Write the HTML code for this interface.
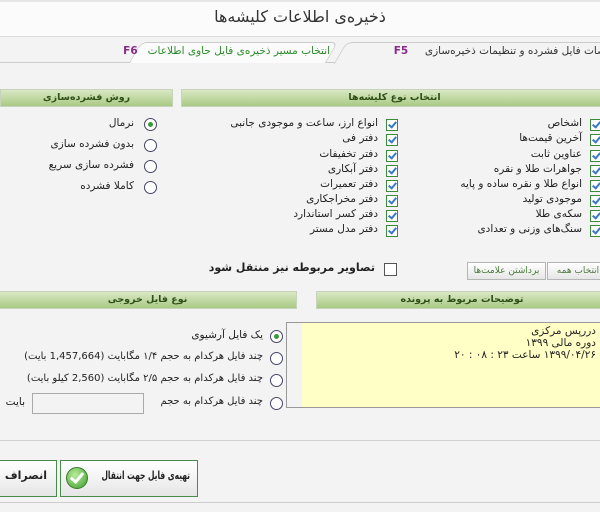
<!DOCTYPE html>
<html><head><meta charset="utf-8"><style>
body{margin:0;width:600px;height:512px;overflow:hidden;background:#f3f3f3;font-family:"DejaVu Sans","Liberation Sans","Noto Sans CJK SC",sans-serif;font-size:10.5px;color:#222;position:relative}
.a{position:absolute;white-space:nowrap}
.hdr{position:absolute;height:16px;background:linear-gradient(#d9e8c4,#a9c985);border:1px solid #c7d3bb;color:#2f4f1a;font-weight:bold;font-size:9.5px;text-align:center;line-height:16px}
.cb{position:absolute;width:10px;height:10px;border:1px solid #3a8a3a;background:#fff}
.cb:after{content:"";position:absolute;left:3px;top:0px;width:3px;height:6px;border:solid #3a78c8;border-width:0 2px 2px 0;transform:rotate(40deg)}
.rt{position:absolute;text-align:right;direction:rtl;white-space:nowrap}
.rd{position:absolute;width:11px;height:11px;border:1px solid #446;border-radius:50%;background:#fff}
.rd.on:after{content:"";position:absolute;left:3px;top:3px;width:5px;height:5px;border-radius:50%;background:#3a9a3a}
.btn{position:absolute;border:1px solid #b5b5b5;background:linear-gradient(#fff,#e6e6e6);font-size:9px;color:#4a7a3a;text-align:center;line-height:16px;direction:rtl}
</style></head><body>
<div class="a" style="left:0;top:0;width:600px;height:34px;background:#fbfbfb;border-bottom:1px solid #ddd;border-top:2px solid #e6e6e6"></div>
<div class="a" style="left:0;top:7px;width:600px;text-align:center;font-size:16px;color:#333;direction:rtl">ذخیره‌ی اطلاعات کلیشه‌ها</div>
<div class="a" style="left:0;top:62px;width:600px;border-top:1px solid #ccc"></div>
<div class="a" style="left:135px;top:42px;width:195px;height:20px;background:#fbfbfb;border:1px solid #ccc;border-bottom:none;border-radius:6px 6px 0 0;transform:skewX(-30deg)"></div>
<div class="rt" style="right:270px;top:45px;font-size:10.5px;color:#2a8a2a">انتخاب مسیر ذخیره‌ی فایل حاوی اطلاعات&nbsp;&nbsp;&nbsp;<span style="color:#8a2a8a;font-weight:bold">F6</span></div>
<div class="a" style="left:340px;top:42px;width:300px;height:21px;background:#f3f3f3;border:1px solid #ccc;border-bottom:none;border-radius:6px 0 0 0;transform:skewX(-30deg)"></div>
<div class="rt" style="right:-28px;top:45px;font-size:10.5px;color:#333">مشخصات فایل فشرده و تنظیمات ذخیره‌سازی&nbsp;&nbsp;&nbsp;&nbsp;&nbsp;<span style="color:#8a2a8a;font-weight:bold">F5</span></div>

<div class="hdr" style="left:0;top:89px;width:171px">روش فشرده‌سازی</div>
<div class="hdr" style="left:181px;top:89px;width:425px">انتخاب نوع کلیشه‌ها</div>

<div class="rd on" style="left:144px;top:118px"></div><div class="rt" style="right:466px;top:117px">نرمال</div>
<div class="rd" style="left:144px;top:139px"></div><div class="rt" style="right:466px;top:138px">بدون فشرده سازی</div>
<div class="rd" style="left:144px;top:160px"></div><div class="rt" style="right:466px;top:159px">فشرده سازی سریع</div>
<div class="rd" style="left:144px;top:181px"></div><div class="rt" style="right:466px;top:180px">کاملا فشرده</div>

<div class="cb" style="left:590px;top:119px"></div><div class="rt" style="right:18px;top:117px">اشخاص</div>
<div class="cb" style="left:590px;top:134px"></div><div class="rt" style="right:18px;top:132px">آخرین قیمت‌ها</div>
<div class="cb" style="left:590px;top:150px"></div><div class="rt" style="right:18px;top:148px">عناوین ثابت</div>
<div class="cb" style="left:590px;top:165px"></div><div class="rt" style="right:18px;top:163px">جواهرات طلا و نقره</div>
<div class="cb" style="left:590px;top:180px"></div><div class="rt" style="right:18px;top:178px">انواع طلا و نقره ساده و پایه</div>
<div class="cb" style="left:590px;top:195px"></div><div class="rt" style="right:18px;top:193px">موجودی تولید</div>
<div class="cb" style="left:590px;top:210px"></div><div class="rt" style="right:18px;top:208px">سکه‌ی طلا</div>
<div class="cb" style="left:590px;top:225px"></div><div class="rt" style="right:18px;top:223px">سنگ‌های وزنی و تعدادی</div>

<div class="cb" style="left:386px;top:119px"></div><div class="rt" style="right:222px;top:117px">انواع ارز، ساعت و موجودی جانبی</div>
<div class="cb" style="left:386px;top:134px"></div><div class="rt" style="right:222px;top:132px">دفتر فی</div>
<div class="cb" style="left:386px;top:150px"></div><div class="rt" style="right:222px;top:148px">دفتر تخفیفات</div>
<div class="cb" style="left:386px;top:165px"></div><div class="rt" style="right:222px;top:163px">دفتر آبکاری</div>
<div class="cb" style="left:386px;top:180px"></div><div class="rt" style="right:222px;top:178px">دفتر تعمیرات</div>
<div class="cb" style="left:386px;top:195px"></div><div class="rt" style="right:222px;top:193px">دفتر مخراجکاری</div>
<div class="cb" style="left:386px;top:210px"></div><div class="rt" style="right:222px;top:208px">دفتر کسر استاندارد</div>
<div class="cb" style="left:386px;top:225px"></div><div class="rt" style="right:222px;top:223px">دفتر مدل مستر</div>

<div class="btn" style="left:547px;top:262px;width:60px">انتخاب همه</div>
<div class="btn" style="left:467px;top:262px;width:77px">برداشتن علامت‌ها</div>
<div class="a" style="left:384px;top:263px;width:11px;height:11px;border:1px solid #555;background:#fff"></div>
<div class="rt" style="right:225px;top:261px;font-weight:bold;font-size:11px">تصاویر مربوطه نیز منتقل شود</div>

<div class="hdr" style="left:-2px;top:291px;width:297px">نوع فایل خروجی</div>
<div class="hdr" style="left:316px;top:291px;width:290px">توضیحات مربوط به پرونده</div>

<div class="a" style="left:286px;top:322px;width:320px;height:84px;background:#ffffc6;border:1px solid #999"></div>
<div class="a" style="left:287px;top:323px;width:15px;height:84px;background:#f3f3f3"></div>
<div class="rt" style="right:4px;top:325px;line-height:12px;font-size:10.5px">دررپس مرکزی<br>دوره مالی ۱۳۹۹<br>۱۳۹۹/۰۴/۲۶ ساعت ۲۳ : ۰۸ : ۲۰</div>

<div class="rd on" style="left:270px;top:330px"></div><div class="rt" style="right:337px;top:329px">یک فایل آرشیوی</div>
<div class="rd" style="left:270px;top:352px"></div><div class="rt" style="right:337px;top:351px;font-size:10px">چند فایل هرکدام به حجم ۱/۴ مگابایت (1,457,664 بایت)</div>
<div class="rd" style="left:270px;top:374px"></div><div class="rt" style="right:337px;top:373px;font-size:10px">چند فایل هرکدام به حجم ۲/۵ مگابایت (2,560 کیلو بایت)</div>
<div class="rd" style="left:270px;top:397px"></div><div class="rt" style="right:337px;top:396px;font-size:10px">چند فایل هرکدام به حجم</div>
<div class="a" style="left:32px;top:393px;width:110px;height:19px;background:#f3f3f3;border:1px solid #aaa"></div>
<div class="rt" style="right:575px;top:396px">بایت</div>

<div class="a" style="left:0;top:440px;width:600px;border-top:1px solid #d0d0d0"></div>
<div class="a" style="left:60px;top:460px;width:136px;height:35px;border:1px solid #4a8a4a;background:linear-gradient(#fff,#e6e6e6)"></div>
<div class="a" style="left:66px;top:467px;width:20px;height:20px;border-radius:50%;background:radial-gradient(circle at 40% 35%,#b8ec9a,#3e9e2e);border:1px solid #3a7a2a"></div>
<div class="a" style="left:73px;top:470px;width:5px;height:10px;border:solid #fff;border-width:0 3px 3px 0;transform:rotate(40deg)"></div>
<div class="a" style="left:92px;top:469px;width:98px;text-align:right;direction:rtl;font-size:11px;font-weight:bold;transform:scaleX(0.68);transform-origin:right">تهیه‌ی فایل جهت انتقال</div>
<div class="a" style="left:-2px;top:460px;width:57px;height:35px;border:1px solid #4a8a4a;background:linear-gradient(#fff,#e6e6e6)"></div>
<div class="rt" style="right:553px;top:469px;font-size:11px;font-weight:bold">انصراف</div>
<div class="a" style="left:0;top:502px;width:600px;border-top:1px solid #ccc"></div>
</body></html>
